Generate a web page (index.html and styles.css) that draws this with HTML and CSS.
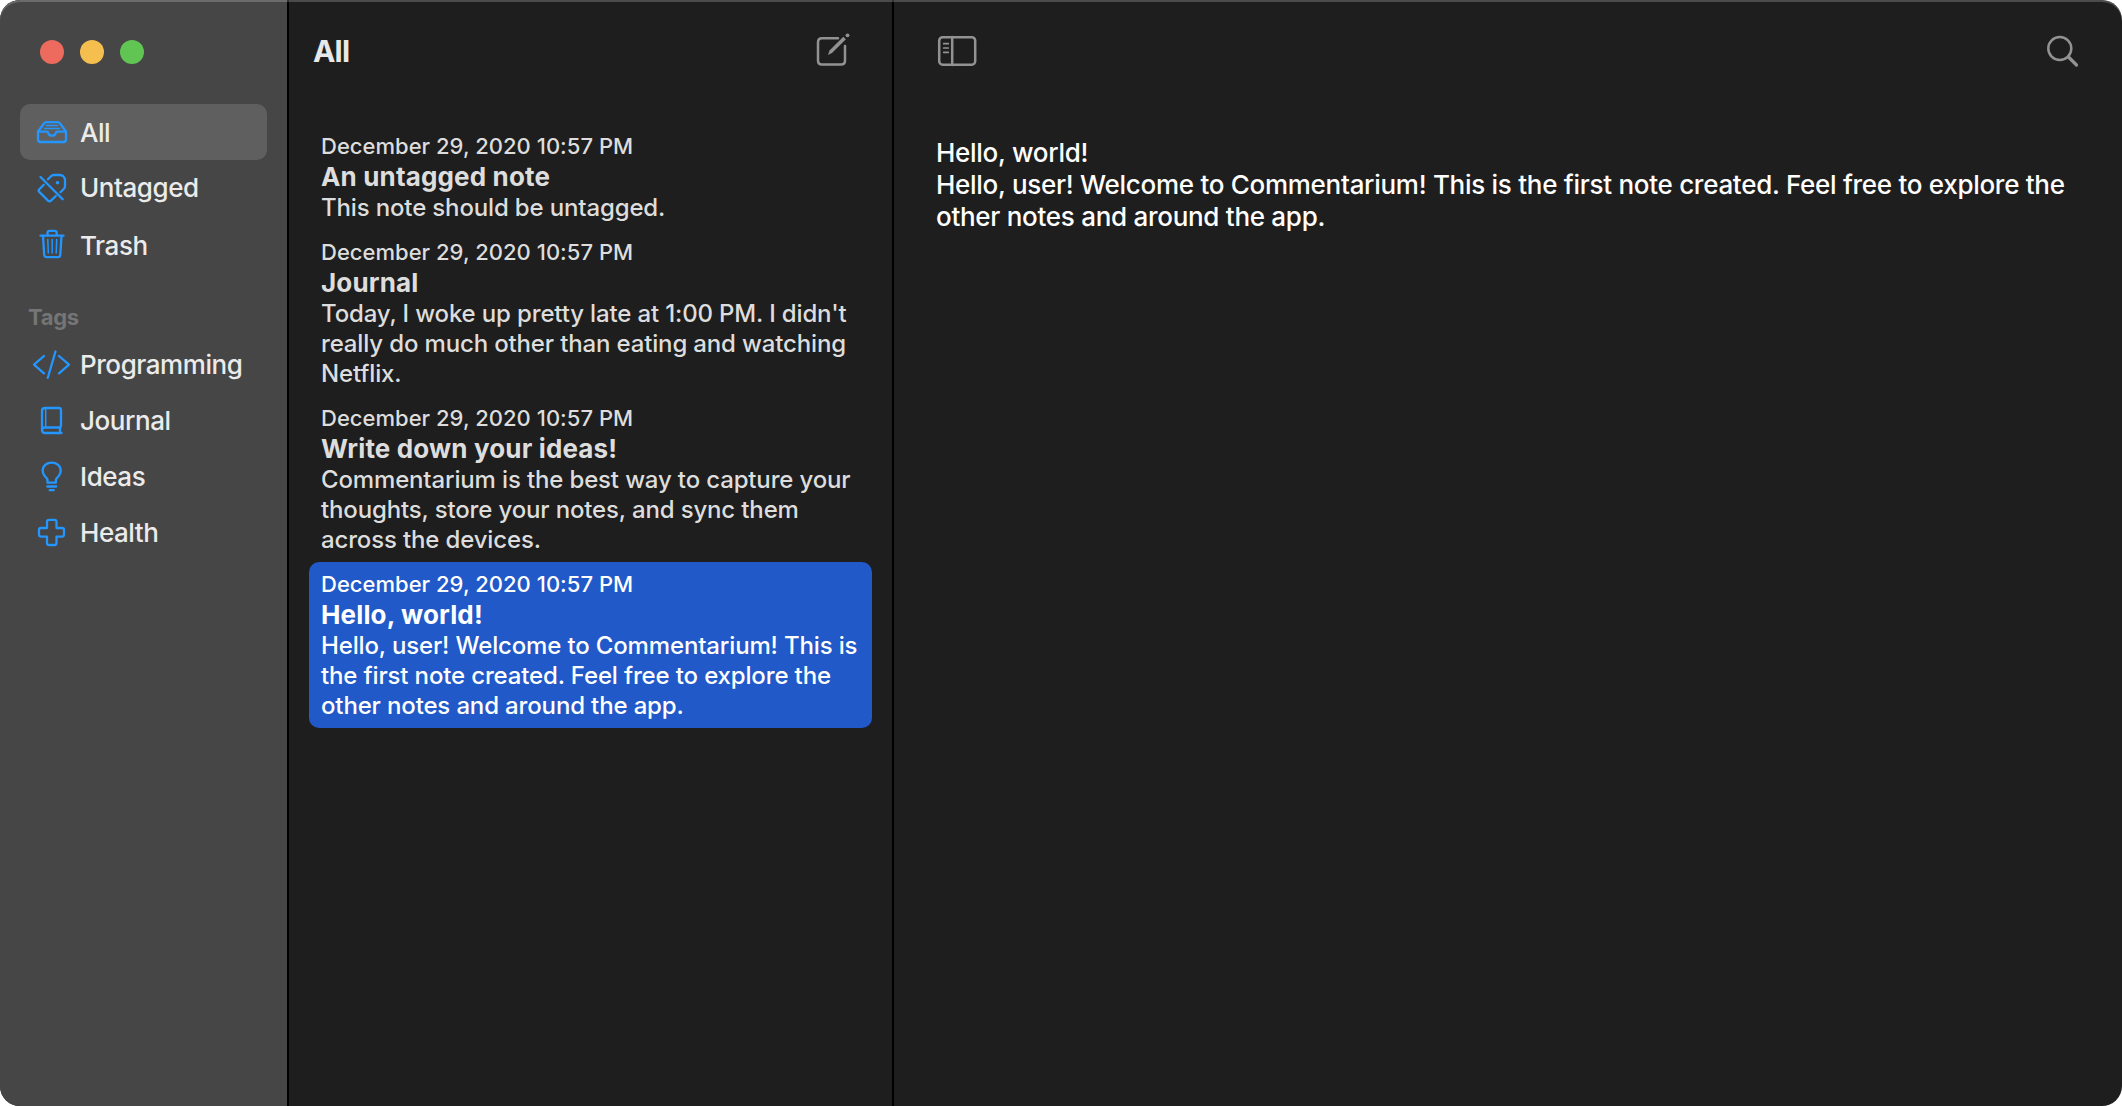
FILE: index.html
```html
<!DOCTYPE html>
<html lang="en">
<head>
<meta charset="utf-8">
<title>Commentarium</title>
<link rel="stylesheet" href="styles.css">
</head>
<body>
<div class="window">
  <aside class="sidebar">
    <div class="traffic"><span class="light close"></span><span class="light minimize"></span><span class="light zoom"></span></div>
    <nav class="nav">
      <a class="item selected">
        <svg class="icon" viewBox="32 117 40 32"><path d="M38 132.500L44 124.500Q45 123.200 46.500 123.200H57.500Q59 123.200 60 124.500L66 132.500V140.500Q66 143 63.500 143H40.500Q38 143 38 140.500ZM38 132.700H46.800Q48 132.700 48.200 134Q48.800 136.700 52 136.700Q55.200 136.700 55.800 134Q56 132.700 57.200 132.700H66"/><path class="fine" d="M46.500 126.500H57.500M44.500 129.500H59.500"/></svg>
        <span>All</span>
      </a>
      <a class="item">
        <svg class="icon" viewBox="32 172 40 32"><path d="M40.500 177L62.700 199.300M48 179.300L51 176.200Q52.200 175 54 175H60Q62 175 63.300 176.400Q65 178 65 180V186Q65 187.600 63.700 189L60.500 192.200M43.800 184.800L39.300 189.200Q38 190.500 39.300 191.900L48 200.600Q49.500 202 51 200.600L55.800 196"/><circle class="solid" cx="57.500" cy="182.700" r="1.800"/></svg>
        <span>Untagged</span>
      </a>
      <a class="item trash">
        <svg class="icon" viewBox="32 228 40 32"><path d="M40.500 235.700H63.500M47.500 235V233Q47.500 230.900 49.600 230.900H54.600Q56.700 230.900 56.700 233V235M43 236L44.200 254.700Q44.400 257.100 46.700 257.100H58Q60.200 257.100 60.300 254.700L61.500 236"/><path class="fine" d="M47.800 239.500L48.300 253M52.200 239.500V253M56.700 239.500L56.200 253"/></svg>
        <span>Trash</span>
      </a>
      <h2 class="heading">Tags</h2>
      <a class="item">
        <svg class="icon" viewBox="32 349 40 32"><path d="M44 356L34 364.700L44 373.300M59 356L69 364.700L59 373.300M55.500 351.500L47.800 377.800"/></svg>
        <span>Programming</span>
      </a>
      <a class="item">
        <svg class="icon" viewBox="32 405 40 32"><path d="M61.500 433H45Q42 433 42 430V411Q42 408 45 408H58.800Q61 408 61 410.200V425.500Q61 427.500 59 427.500H45Q42 427.500 42 430.200M60 428V433"/><path class="fine" d="M45.700 408V427.500"/></svg>
        <span>Journal</span>
      </a>
      <a class="item">
        <svg class="icon" viewBox="32 461 40 32"><path d="M47.500 482.500V480Q47.500 479 46.700 478Q42.700 473.800 42.700 470.700C42.700 459.700 60.700 459.700 60.700 470.700Q60.700 473.800 56.700 478Q55.900 479 55.900 480V482.500Z" transform="translate(0 .2)"/><path d="M47.300 486.500H56.200M49.700 490.200H53.700"/></svg>
        <span>Ideas</span>
      </a>
      <a class="item">
        <svg class="icon" viewBox="32 517 40 32"><path d="M49 519.900H54.500Q56.500 519.900 56.500 521.900V528H62Q64 528 64 530V534.600Q64 536.600 62 536.600H56.500V543Q56.500 545 54.500 545H49Q47 545 47 543V536.600H41Q39 536.600 39 534.600V530Q39 528 41 528H47V521.900Q47 519.900 49 519.900Z"/></svg>
        <span>Health</span>
      </a>
    </nav>
  </aside>

  <section class="list">
    <header class="bar">
      <h1 class="title">All</h1>
      <svg class="tool compose" viewBox="814 30 40 40"><path d="M838 38.200H822Q818 38.200 818 42.200V60.500Q818 64.500 822 64.500H841Q845 64.500 845 60.500V46"/><path class="pencil" d="M828 55L829.500 50.500L843.300 36.700L845.900 39.300L832 53Z"/><circle class="eraser" cx="847.500" cy="35.300" r="1.900"/></svg>
    </header>
    <div class="notes">
      <article class="note">
        <time>December 29, 2020 10:57 PM</time>
        <h3>An untagged note</h3>
        <p>This note should be untagged.</p>
      </article>
      <article class="note">
        <time>December 29, 2020 10:57 PM</time>
        <h3>Journal</h3>
        <p>Today, I woke up pretty late at 1:00 PM. I didn't<br>really do much other than eating and watching<br>Netflix.</p>
      </article>
      <article class="note">
        <time>December 29, 2020 10:57 PM</time>
        <h3>Write down your ideas!</h3>
        <p>Commentarium is the best way to capture your<br>thoughts, store your notes, and sync them<br>across the devices.</p>
      </article>
      <article class="note active">
        <time>December 29, 2020 10:57 PM</time>
        <h3>Hello, world!</h3>
        <p>Hello, user! Welcome to Commentarium! This is<br>the first note created. Feel free to explore the<br>other notes and around the app.</p>
      </article>
    </div>
  </section>

  <main class="editor">
    <header class="bar">
      <svg class="tool" viewBox="936 30 42 40"><rect x="939.200" y="37.200" width="36" height="27.500" rx="3.500"/><path d="M952.200 37V65"/><path class="fine" d="M943.700 43.700H948.300M943.700 48H948.300M943.700 52.300H948.300"/></svg>
      <svg class="tool" viewBox="2042 30 40 40"><circle cx="2059.800" cy="48.500" r="11.500"/><path class="handle" d="M2068.500 57L2076.500 65"/></svg>
    </header>
    <div class="text">Hello, world!<br>Hello, user! Welcome to Commentarium! This is the first note created. Feel free to explore the<br>other notes and around the app.</div>
  </main>
</div>
</body>
</html>
```
FILE: styles.css
```css
* { box-sizing: border-box; }
body {
  margin: 0;
  background: #fff;
  font-family: Inter, "Liberation Sans", sans-serif;
  font-weight: 450;
}
h1, h2, h3, p { margin: 0; }
.window {
  position: relative;
  display: flex;
  width: 2122px;
  height: 1106px;
  overflow: hidden;
  border-radius: 20px;
  background: #1e1e1e;
}
/* light rim along the top edge of the window */
.window::after {
  content: "";
  position: absolute;
  inset: 0;
  border-radius: 20px;
  box-shadow: inset 0 2px 0 rgba(255, 255, 255, .2);
  pointer-events: none;
}
.sidebar {
  flex: 0 0 289px;
  width: 289px;
  padding: 40px 22px 0 20px;
  border-right: 2px solid #000;
  background: #464646;
}
.traffic { display: flex; gap: 16px; padding-left: 20px; }
.light { width: 24px; height: 24px; border-radius: 50%; }
.close { background: #ed6a5e; }
.minimize { background: #f5bf4f; }
.zoom { background: #61c554; }
.nav { display: flex; flex-direction: column; margin-top: 40px; }
.item {
  display: flex;
  align-items: center;
  gap: 8px;
  height: 56px;
  width: 247px;
  padding-left: 12px;
  border-radius: 10px;
  color: #ebebeb;
  font-size: 26px;
  letter-spacing: -.44px;
  white-space: nowrap;
}
.item:not(.selected) span { margin-top: -2px; }
.item.trash span { margin-top: 0; }
.selected { background: #5f5f5f; }
.trash { height: 58px; }
.trash .icon { margin-top: -2px; }
.icon {
  width: 40px;
  height: 32px;
  flex: none;
  fill: none;
  stroke: #2496ff;
  stroke-width: 2.300;
  stroke-linecap: round;
  stroke-linejoin: round;
}
.icon .fine { stroke-width: 1.5; }
.icon .solid { fill: #2496ff; stroke: none; }
.heading {
  height: 63px;
  padding: 29px 0 0 8px;
  color: #757575;
  font-size: 22px;
  line-height: 28px;
  font-weight: 700;
  letter-spacing: -.3px;
}
.list {
  flex: 0 0 605px;
  width: 605px;
  border-right: 2px solid #000;
}
.bar {
  display: flex;
  justify-content: space-between;
  align-items: center;
  height: 100px;
}
.list .bar { padding: 0 38px 0 24px; }
.title {
  padding-top: 2px;
  color: #e8e8e8;
  font-size: 30px;
  font-weight: 700;
  line-height: 36px;
  letter-spacing: -.8px;
}
.tool {
  width: 40px;
  height: 40px;
  fill: none;
  stroke: #929292;
  stroke-width: 2.500;
  stroke-linecap: round;
  stroke-linejoin: round;
}
.tool .fine { stroke-width: 1.700; }
.tool .pencil, .tool .eraser { fill: #929292; stroke: none; }
.tool .handle { stroke-width: 3.200; }
.notes { padding: 24px 20px 0; }
.note {
  padding: 8px 12px;
  border-radius: 10px;
  color: #dddddd;
  white-space: nowrap;
}
.note time { display: block; font-size: 22px; line-height: 28px; letter-spacing: .02px; }
.note h3 { padding-top: 1px; font-size: 26px; line-height: 32px; font-weight: 700; letter-spacing: .15px; }
.note p { margin-bottom: -1px; font-size: 24px; line-height: 30px; letter-spacing: -.15px; }
.active { background: #2159c9; color: #fff; }
.editor { flex: 1; }
.editor .bar { padding: 0 40px 0 42px; }
.editor .bar .tool:first-child { width: 42px; }
.text {
  padding: 37px 0 0 42px;
  color: #fff;
  font-size: 26px;
  line-height: 32px;
  letter-spacing: -.285px;
  white-space: nowrap;
}
```
